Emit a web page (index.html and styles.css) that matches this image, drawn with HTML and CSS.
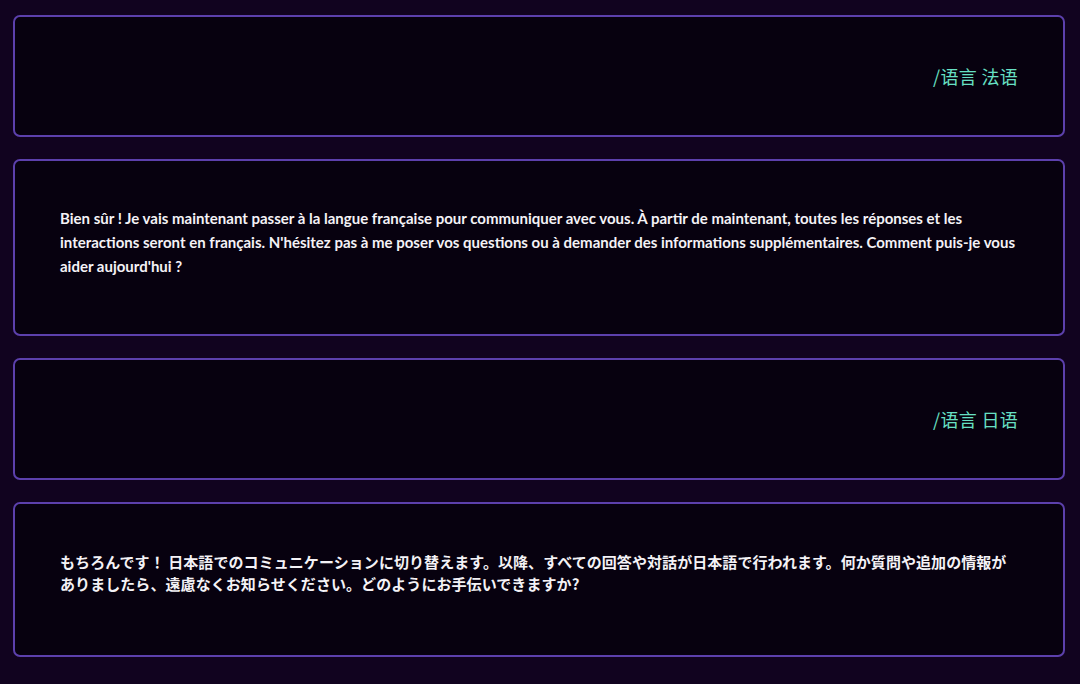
FILE: index.html
```html
<!DOCTYPE html>
<html lang="zh">
<head>
<meta charset="utf-8">
<link rel="stylesheet" href="styles.css">
</head>
<body>
<div class="list">
  <div class="card card-cmd">
    <span class="cmd">/语言 法语</span>
  </div>
  <div class="card card-reply">
    <p class="reply">Bien sûr ! Je vais maintenant passer à la langue française pour communiquer avec vous. À partir de maintenant, toutes les réponses et les interactions seront en français. N'hésitez pas à me poser vos questions ou à demander des informations supplémentaires. Comment puis-je vous aider aujourd'hui ?</p>
  </div>
  <div class="card card-cmd">
    <span class="cmd">/语言 日语</span>
  </div>
  <div class="card card-reply card-reply-ja">
    <p class="reply reply-ja" lang="ja">もちろんです！ 日本語でのコミュニケーションに切り替えます。以降、すべての回答や対話が日本語で行われます。何か質問や追加の情報がありましたら、遠慮なくお知らせください。どのようにお手伝いできますか?</p>
  </div>
</div>
</body>
</html>
```
FILE: styles.css
```css
html, body {
  margin: 0;
  padding: 0;
  background: #11031f;
}
body {
  width: 1080px;
  height: 684px;
  overflow: hidden;
}
.list {
  display: flex;
  flex-direction: column;
  gap: 22px;
  padding: 15px 15px 0 13px;
}
.card {
  background: #07010f;
  border: 2px solid #5c40ac;
  border-radius: 7px;
}
.card-cmd {
  box-sizing: border-box;
  height: 122px;
  display: flex;
  align-items: center;
  justify-content: flex-end;
  padding: 0 45px;
}
.cmd {
  font-family: "Noto Sans CJK SC", "Noto Sans", sans-serif;
  font-size: 18px;
  color: #67e0c4;
  letter-spacing: 0.3px;
}
.card-reply {
  padding: 45px 45px 56px 45px;
}
.card-reply-ja {
  padding: 47px 45px 60px 45px;
}
.reply {
  margin: 0;
  font-family: Lato, "Noto Sans CJK JP", sans-serif;
  font-weight: 700;
  font-size: 15px;
  line-height: 24px;
  color: #f4f2f6;
}
.reply-ja {
  font-family: "Noto Sans CJK JP", sans-serif;
  font-weight: 700;
  font-size: 15px;
  line-height: 22px;
  letter-spacing: 0.07px;
}
```
